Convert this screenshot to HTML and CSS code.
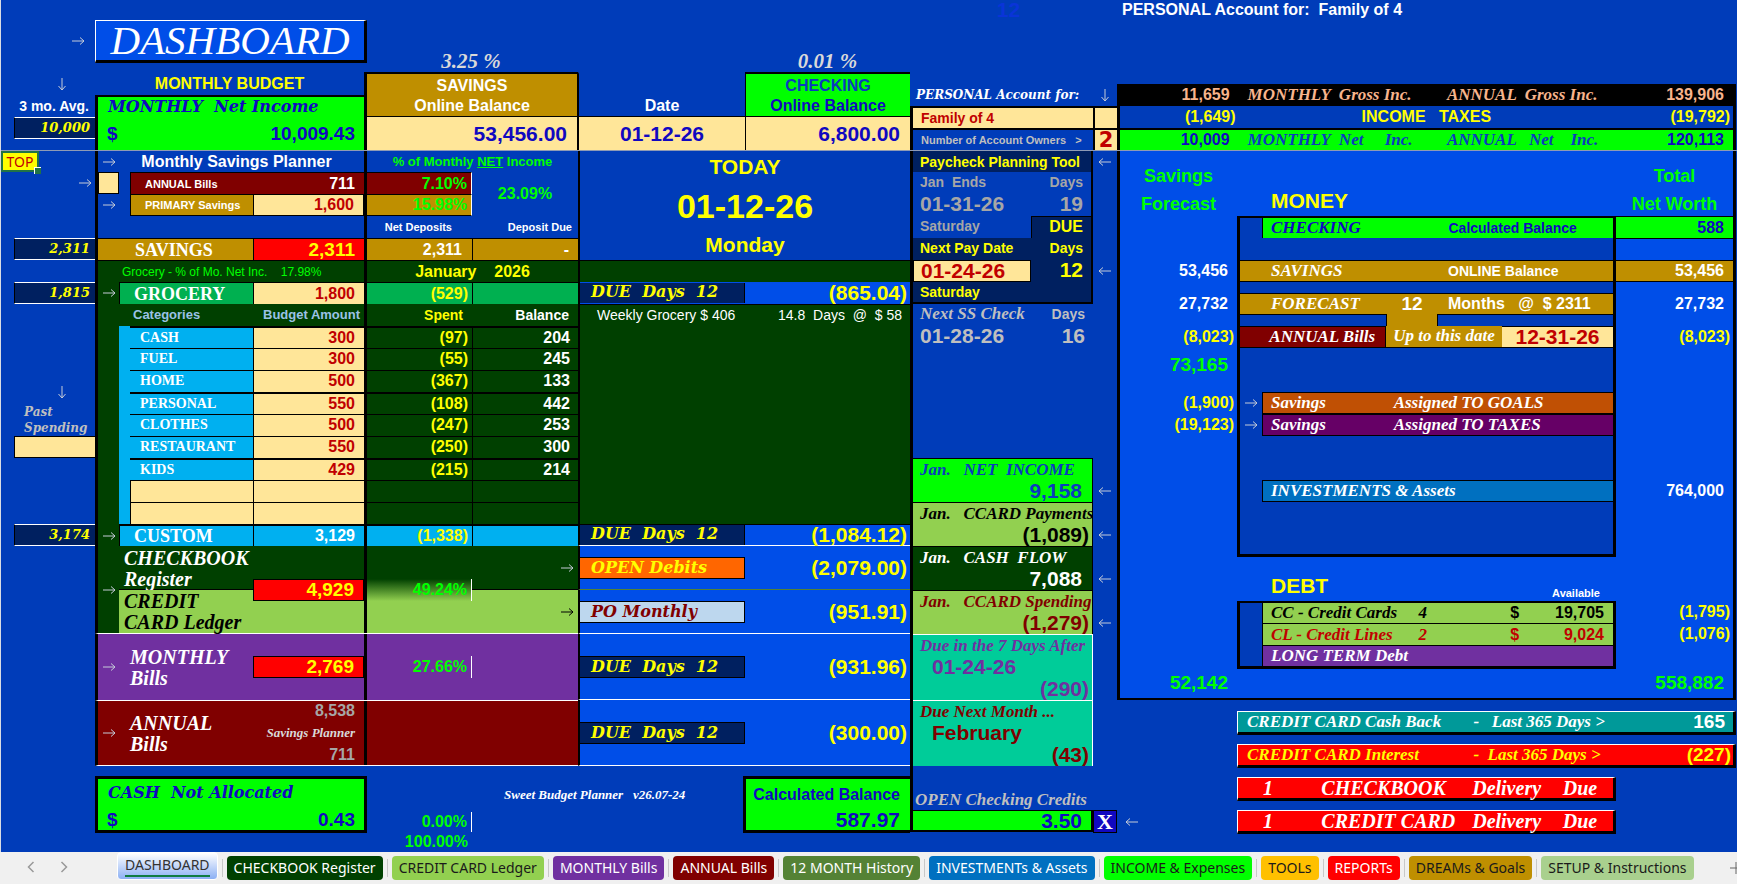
FILE: index.html
```html
<!DOCTYPE html>
<html lang="en">
<head>
<meta charset="utf-8">
<title>Sweet Budget Planner - Dashboard</title>
<link rel="stylesheet" href="styles.css">
</head>
<body>
<svg class="defs" aria-hidden="true">
<symbol id="right" viewBox="0 0 14 10"><path d="M1 5H13M9 1.5L13 5L9 8.5" fill="none" stroke="currentColor"/></symbol>
<symbol id="left" viewBox="0 0 14 10"><path d="M13 5H1M5 1.5L1 5L5 8.5" fill="none" stroke="currentColor"/></symbol>
<symbol id="down" viewBox="0 0 10 14"><path d="M5 1V13M1.5 9L5 13L8.5 9" fill="none" stroke="currentColor"/></symbol>
</svg>
<main class="sheet">
<header class="cols head">
<section class="past">
<div class="h20"></div>
<div class="h42 cell end pr10"><svg class="ar"><use href="#right"/></svg></div>
<div class="h11"></div>
<div class="h22 cell mid pl28"><svg class="ad"><use href="#down"/></svg></div>
<div class="h22 cell end pr6 t14 white">3 mo. Avg.</div>
<div class="h22 cell end avg">10,000</div>
</section>
<section class="budgethead">
<div class="h20"></div>
<h1 class="title">DASHBOARD</h1>
<div class="h10"></div>
<div class="h22 cell mid t16 yellow">MONTHLY BUDGET</div>
<div class="netbox">
<div class="h20 cell wide ink pl10">MONTHLY  Net Income</div>
<div class="grow cell between n22 ink px9"><span>$</span><span>10,009.43</span></div>
</div>
</section>
<section class="bank savings">
<div class="rate">3.25 %</div>
<div class="bankname gold white"><span>SAVINGS</span><span>Online Balance</span></div>
<div class="h33 cell end cream ink t21 pr10">53,456.00</div>
</section>
<section class="bank">
<div class="rate"></div>
<div class="bankname plain white"><span>Date</span></div>
<div class="h33 cell mid cream ink t21">01-12-26</div>
</section>
<section class="bank">
<div class="rate">0.01 %</div>
<div class="bankname green"><span class="bluetext">CHECKING</span><span class="ink">Online Balance</span></div>
<div class="h33 cell end cream ink t21 pr10">6,800.00</div>
</section>
<section class="owner">
<div class="h84 faint t21">12</div>
<div class="h22 cell wide small white pl3">PERSONAL Account for:</div>
<div class="h22 cell cream red t14 pl8 bt2">Family of 4</div>
<div class="h22 cell n13 grey pl8 bt2">Number of Account Owners   &gt;</div>
</section>
<section class="strip">
<div class="h84"></div>
<div class="h22 cell mid"><svg class="ad"><use href="#down"/></svg></div>
<div class="h22 cream bt2 bl2"></div>
<div class="h22 cell mid cream bt2 bl2 red two">2</div>
</section>
<section class="incomes">
<div class="h84 t16 white holder">PERSONAL Account for:  Family of 4</div>
<div class="irow black salmon"><span class="num">11,659</span><span class="it">MONTHLY  Gross Inc.</span><span class="it">ANNUAL  Gross Inc.</span><span class="num">139,906</span></div>
<div class="irow yellow"><span class="num neg">(1,649)</span><span class="both">INCOME   TAXES</span><span class="num neg">(19,792)</span></div>
<div class="irow green ink bt2"><span class="num">10,009</span><span class="it bluetext">MONTHLY  Net     Inc.</span><span class="it bluetext">ANNUAL   Net    Inc.</span><span class="num">120,113</span></div>
</section>
</header>

<div class="cols body">
<section class="past">
<div class="first cell"><button class="top" type="button">TOP</button></div>
<div class="h22 cell end pr3"><svg class="ar"><use href="#right"/></svg></div>
<div class="h44"></div>
<div class="h22 cell end avg">2,311</div>
<div class="h22"></div>
<div class="h22 cell end avg">1,815</div>
<div class="h77"></div>
<div class="h22 cell mid pl28"><svg class="ad"><use href="#down"/></svg></div>
<div class="h33 pastlabel">Past<br>Spending</div>
<div class="h22 cream box"></div>
<div class="h66"></div>
<div class="h22 cell end avg">3,174</div>
</section>

<section class="budget">
<div class="brow first">
<div class="cell mid"><svg class="ar"><use href="#right"/></svg></div>
<div class="cell mid t16 white s3 pr10">Monthly Savings Planner</div>
<div class="cell mid t13 lime s2 bl3">% of Monthly <u>NET</u> Income</div>
</div>
<div class="brow double">
<div class="cell cream bx"></div><div></div>
<div class="cell maroon n13 white pl14 bl1 bt1">ANNUAL Bills</div><div class="cell end maroon white t16 pr8 bt1">711</div>
<div class="cell end maroon lime t16 pr4 bl3 bt1 brw">7.10%</div>
<div class="cell mid lime t16 tallcell">23.09%</div>
<div class="cell mid"><svg class="ar"><use href="#right"/></svg></div><div></div>
<div class="cell gold n13 white pl14 bl1 bt1 bb1">PRIMARY Savings</div><div class="cell end cream red t16 pr8 bx">1,600</div>
<div class="cell end gold lime t16 pr4 bl3 bt1 bb1 brw">15.98%</div>
</div>
<div class="brow">
<div class="s4"></div>
<div class="cell end n13 white pr20 bl3">Net Deposits</div><div class="cell end n13 white pr6">Deposit Due</div>
</div>
<div class="brow line">
<div class="cell gold white caps s3 pl38">SAVINGS</div><div class="cell end fire yellow n22 pr8 bl1">2,311</div>
<div class="cell end gold white t16 pr10 bl3">2,311</div><div class="cell end gold white t16 pr8 bl1">-</div>
</div>
<div class="brow forest bt1">
<div class="cell n12 thin lime s4 pl24">Grocery - % of Mo. Net Inc.    17.98%</div><div class="cell mid t16 yellow s2 bl3">January    2026</div>
</div>
<div class="brow forest line">
<div class="cell mid"><svg class="ar"><use href="#right"/></svg></div>
<div class="cell jade white caps s2 pl14 bl1">GROCERY</div><div class="cell end cream red t16 pr8 bl1">1,800</div>
<div class="cell end jade yellow t16 pr4 bl3">(529)</div><div class="jade bl1"></div>
</div>
<table class="cats">
<thead><tr class="brow forest"><td></td><th class="cell s2 sky2 pl14 t13">Categories</th><th class="cell end t13 sky2 pr4">Budget Amount</th><th class="cell end t14 yellow pr8 bl3">Spent</th><th class="cell end t14 white pr8">Balance</th></tr></thead>
<tbody>
<tr class="brow forest thick"><td></td><td class="sky"></td><th class="cat">CASH</th><td class="amt">300</td><td class="spent">(97)</td><td class="bal">204</td></tr>
<tr class="brow forest"><td></td><td class="sky"></td><th class="cat">FUEL</th><td class="amt">300</td><td class="spent">(55)</td><td class="bal">245</td></tr>
<tr class="brow forest"><td></td><td class="sky"></td><th class="cat">HOME</th><td class="amt">500</td><td class="spent">(367)</td><td class="bal">133</td></tr>
<tr class="brow forest thick"><td></td><td class="sky"></td><th class="cat">PERSONAL</th><td class="amt">550</td><td class="spent">(108)</td><td class="bal">442</td></tr>
<tr class="brow forest"><td></td><td class="sky"></td><th class="cat">CLOTHES</th><td class="amt">500</td><td class="spent">(247)</td><td class="bal">253</td></tr>
<tr class="brow forest"><td></td><td class="sky"></td><th class="cat">RESTAURANT</th><td class="amt">550</td><td class="spent">(250)</td><td class="bal">300</td></tr>
<tr class="brow forest thick"><td></td><td class="sky"></td><th class="cat">KIDS</th><td class="amt">429</td><td class="spent">(215)</td><td class="bal">214</td></tr>
<tr class="brow forest"><td></td><td class="sky"></td><td class="cat empty"></td><td class="amt"></td><td class="spent"></td><td class="bal"></td></tr>
<tr class="brow forest"><td></td><td class="sky"></td><td class="cat empty"></td><td class="amt"></td><td class="spent"></td><td class="bal"></td></tr>
</tbody>
</table>
<div class="brow forest line thickline">
<div class="cell mid"><svg class="ar"><use href="#right"/></svg></div>
<div class="cell sky white caps s2 pl14 bl1 bbw">CUSTOM</div><div class="cell end sky white t16 pr8 bl1 bbw">3,129</div>
<div class="cell end sky yellow t16 pr4 bl3 bbw">(1,338)</div><div class="sky bl1 bbw"></div>
</div>
<div class="brow ledger">
<div class="cell mid forest full"><svg class="ar"><use href="#right"/></svg></div>
<div class="script white forest checkb">CHECKBOOK<br>Register</div>
<div class="script leaf creditb">CREDIT<br>CARD Ledger</div>
<div class="cell end fire yellow n22 pr8 bx ledgersum">4,929</div>
<div class="forest bl3 upper cell end pr4"><svg class="ar"><use href="#right"/></svg></div>
<div class="leaf bl3 lower cell end pr4 dark"><svg class="ar"><use href="#right"/></svg></div>
<div class="fade cell end lime t16 pr4 bl3 brw ledgerpct">49.24%</div>
</div>
<div class="brow bills purple">
<div class="cell mid"><svg class="ar"><use href="#right"/></svg></div>
<div class="cell script white s2 pl11">MONTHLY<br>Bills</div>
<div class="cell"><div class="h22 cell end fire yellow n22 pr8 bx grow">2,769</div></div>
<div class="cell bl3"><div class="h22 cell end lime t16 pr4 brw grow">27.66%</div></div><div></div>
</div>
<div class="brow bills maroon bbw">
<div class="cell mid"><svg class="ar"><use href="#right"/></svg></div>
<div class="cell script white s2 pl11">ANNUAL<br>Bills</div>
<div class="stack silver pr8"><span class="t16">8,538</span><span class="it">Savings Planner</span><span class="t16">711</span></div>
<div class="bl3 s2"></div>
</div>
<div class="h10"></div>
<div class="brow foot">
<div class="netbox cash s4"><div class="h33 cell wide ink pl10">CASH  Not Allocated</div><div class="grow cell between n22 ink px9"><span>$</span><span>0.43</span></div></div>
<div class="version">Sweet Budget Planner   v26.07-24</div>
<div class="pct"><div class="h22 cell end t16 lime pr4 brw">0.00%</div><div class="h20 cell end t16 lime pr4">100.00%</div></div>
</div>
</section>

<section class="due">
<div class="today"><span class="t21">TODAY</span><span class="t34">01-12-26</span><span class="t21">Monday</span></div>
<div class="h22 forest bt1"></div>
<div class="drow one"><div class="tag navy">DUE  Days  12</div><div class="sum">(865.04)</div></div>
<div class="weekly forest bt1"><span>Weekly Grocery $ 406</span><span>14.8  Days  @  $ 58</span></div>
<div class="drow one bt1 bbw"><div class="tag navy">DUE  Days  12</div><div class="sum">(1,084.12)</div></div>
<div class="drow two2 bbg"><div class="tag orange">OPEN Debits</div><div class="sum">(2,079.00)</div></div>
<div class="drow two2 bbw"><div class="tag ice">PO Monthly</div><div class="sum">(951.91)</div></div>
<div class="drow three bbw"><div class="tag navy">DUE  Days  12</div><div class="sum">(931.96)</div></div>
<div class="drow three bbw"><div class="tag navy">DUE  Days  12</div><div class="sum">(300.00)</div></div>
<div class="gap"></div>
<div class="calcrow"><div class="calc"><span class="t16">Calculated Balance</span><span class="t21">587.97</span></div></div>
</section>

<section class="pay">
<div class="tool">
<div class="first cell navy yellow t14 pl7">Paycheck Planning Tool</div>
<div class="prow ash t14"><span>Jan  Ends</span><span>Days</span></div>
<div class="prow ash t21"><span>01-31-26</span><span>19</span></div>
<div class="prow ash t14"><span>Saturday</span><span class="navy yellow t16 bl1 bt1">DUE</span></div>
<div class="prow navy yellow t14"><span>Next Pay Date</span><span>Days</span></div>
<div class="prow navy yellow t21"><span class="cream red bx">01-24-26</span><span>12</span></div>
<div class="prow navy yellow t14 bb2"><span>Saturday</span><span></span></div>
</div>
<div class="prow grey t14"><span class="it">Next SS Check</span><span>Days</span></div>
<div class="prow grey t21"><span>01-28-26</span><span>16</span></div>
<div class="h110"></div>
<div class="flow green bluetext"><span class="it">Jan.   NET  INCOME</span><span class="t21 pos">9,158</span></div>
<div class="flow leaf"><span class="it">Jan.   CCARD Payments</span><span class="t21">(1,089)</span></div>
<div class="flow forest white"><span class="it">Jan.   CASH  FLOW</span><span class="t21 pos">7,088</span></div>
<div class="flow leaf wine"><span class="it">Jan.   CCARD Spending</span><span class="t21">(1,279)</span></div>
<div class="flow mint violet"><span class="it">Due in the 7 Days After</span><span class="t21 lefty">01-24-26</span><span class="t21">(290)</span></div>
<div class="flow mint wine bbw"><span class="it">Due Next Month ...</span><span class="t21 lefty">February</span><span class="t21">(43)</span></div>
<div class="h44 credits it grey">OPEN Checking Credits</div>
<div class="h22 cell end green ink t21 credit">3.50</div>
</section>

<section class="strip">
<div class="first cell mid"><svg class="ar"><use href="#left"/></svg></div>
<div class="h88"></div>
<div class="h22 cell mid"><svg class="ar"><use href="#left"/></svg></div>
<div class="h198"></div>
<div class="h22 cell mid"><svg class="ar"><use href="#left"/></svg></div>
<div class="h22"></div>
<div class="h22 cell mid"><svg class="ar"><use href="#left"/></svg></div>
<div class="h22"></div>
<div class="h22 cell mid"><svg class="ar"><use href="#left"/></svg></div>
<div class="h22"></div>
<div class="h22 cell mid"><svg class="ar"><use href="#left"/></svg></div>
<div class="h176"></div>
<button class="xbtn" type="button">X</button>
</section>

<section class="worth">
<div class="worthbox">
<div class="wrow h66"><div class="wtitle lime"><span>Savings</span><span>Forecast</span></div><h2 class="heading">MONEY</h2><div class="wtitle lime"><span>Total</span><span>Net Worth</span></div></div>
<div class="wrow"><div></div><div class="m btk"><div class="s4w green ink line1"><span class="it c1">CHECKING</span><span class="c2 t14">Calculated Balance</span></div></div><div class="num green ink line1">588</div></div>
<div class="wrow"><div></div><div class="m"></div><div></div></div>
<div class="wrow"><div class="num">53,456</div><div class="m"><div class="wfull gold line1"><span class="it c1">SAVINGS</span><span class="c2 t14">ONLINE Balance</span></div></div><div class="num gold line1">53,456</div></div>
<div class="wrow h11"><div></div><div class="m"></div><div></div></div>
<div class="wrow"><div class="num">27,732</div><div class="m"><div class="wfull gold line1"><span class="it c1">FORECAST</span><span class="c12 n22">12</span><span class="c2 t16">Months   @  $ 2311</span></div></div><div class="num">27,732</div></div>
<div class="wrow h11"><div></div><div class="m"><div class="link gold"></div></div><div></div></div>
<div class="wrow"><div class="num neg">(8,023)</div><div class="m"><div class="ann maroon it">ANNUAL Bills</div><div class="upto gold it">Up to this date</div><div class="cell mid cream red t21 date">12-31-26</div></div><div class="num neg">(8,023)</div></div>
<div class="wrow h44"><div class="num lime n22">73,165</div><div class="m"></div><div></div></div>
<div class="wrow"><div class="num neg">(1,900)</div><div class="m"><div class="cell mid"><svg class="ar"><use href="#right"/></svg></div><div class="s4w rust line1"><span class="it c1">Savings</span><span class="it c15">Assigned TO GOALS</span></div></div><div></div></div>
<div class="wrow"><div class="num neg">(19,123)</div><div class="m"><div class="cell mid"><svg class="ar"><use href="#right"/></svg></div><div class="s4w plum line1"><span class="it c1">Savings</span><span class="it c15">Assigned TO TAXES</span></div></div><div></div></div>
<div class="wrow h44"><div></div><div class="m"></div><div></div></div>
<div class="wrow"><div></div><div class="m"><div class="s4w ocean line1"><span class="it c1">INVESTMENTS &amp; Assets</span></div></div><div class="num">764,000</div></div>
<div class="wrow h55"><div></div><div class="m bbk"></div><div></div></div>
<div class="wrow h44"><div></div><div class="debthead"><h2 class="heading">DEBT</h2><span class="n13">Available</span></div><div></div></div>
<div class="wrow"><div></div><div class="m btk"><div class="s4w leaf debt"><span class="it">CC - Credit Cards</span><span class="it">4</span><span class="t16">$</span><span class="t16">19,705</span></div></div><div class="num neg">(1,795)</div></div>
<div class="wrow"><div></div><div class="m"><div class="s4w leaf debt crimson bt1"><span class="it">CL - Credit Lines</span><span class="it">2</span><span class="t16">$</span><span class="t16">9,024</span></div></div><div class="num neg">(1,076)</div></div>
<div class="wrow"><div></div><div class="m bbk"><div class="s4w purple bt1"><span class="it c1">LONG TERM Debt</span></div></div><div></div></div>
<div class="wrow h33"><div class="num lime n22">52,142</div><div></div><div class="num lime n22">558,882</div></div>
</div>
<div class="wbar"><div></div><div class="bar teal it"><span>CREDIT CARD Cash Back</span><span>-   Last 365 Days &gt;</span><b>165</b></div></div>
<div class="wbar"><div></div><div class="bar fire yellow it"><span>CREDIT CARD Interest</span><span>-  Last 365 Days &gt;</span><b class="neg">(227)</b></div></div>
<div class="wbar short"><div></div><div class="bar fire script"><span>1</span><span>CHECKBOOK</span><span>Delivery</span><span>Due</span></div></div>
<div class="wbar short"><div class="cell pl8"><svg class="ar"><use href="#left"/></svg></div><div class="bar fire script"><span>1</span><span>CREDIT CARD</span><span>Delivery</span><span>Due</span></div></div>
</section>
</div>
</main>

<nav class="tabs" aria-label="Sheets">
<button class="nav" type="button" aria-label="Previous sheets"><svg viewBox="0 0 8 12"><path d="M6.500 1L1.500 6L6.500 11" fill="none" stroke="currentColor" stroke-width="1.500"/></svg></button>
<button class="nav" type="button" aria-label="Next sheets"><svg viewBox="0 0 8 12"><path d="M1.500 1L6.500 6L1.500 11" fill="none" stroke="currentColor" stroke-width="1.500"/></svg></button>
<a class="tab current" href="#dashboard"><span>DASHBOARD</span></a>
<a class="tab forest" href="#checkbook">CHECKBOOK Register</a>
<a class="tab leaf" href="#ledger">CREDIT CARD Ledger</a>
<a class="tab purple" href="#monthly">MONTHLY Bills</a>
<a class="tab maroon" href="#annual">ANNUAL Bills</a>
<a class="tab moss" href="#history">12 MONTH History</a>
<a class="tab ocean" href="#assets">INVESTMENTs &amp; Assets</a>
<a class="tab green" href="#income">INCOME &amp; Expenses</a>
<a class="tab amber" href="#tools">TOOLs</a>
<a class="tab fire" href="#reports">REPORTs</a>
<a class="tab gold dk" href="#dreams">DREAMs &amp; Goals</a>
<a class="tab sage" href="#setup">SETUP &amp; Instructions</a>
<button class="add" type="button" aria-label="New sheet"><svg viewBox="0 0 14 14"><path d="M7 1V13M1 7H13" fill="none" stroke="currentColor"/></svg></button>
</nav>
</body>
</html>
```
FILE: styles.css
```css
* { box-sizing: border-box; }
body {
  margin: 0;
  min-height: 100vh;
  display: flex;
  flex-direction: column;
  overflow-x: hidden;
  font: bold 16px/20px "Liberation Sans", Arial, sans-serif;
  background: #003cb9;
  color: #000;
}
.defs { display: none; }
.sheet { flex: 1; border-left: 1px solid #d8dce4; }
.cols { display: grid; }
.head { grid-template-columns: 94fr 269fr 214fr 167fr 165fr 183fr 24fr 620fr; border-bottom: 1px solid #8f9bb5; }
.body { grid-template-columns: 94fr 483fr 332fr 183fr 24fr 620fr; }
section { display: flex; flex-direction: column; min-width: 0; white-space: pre; }

.h10, .gap { height: 10px; } .h11 { height: 11px; } .h20 { height: 20px; } .first { height: 21px; }
.h22 { height: 22px; } .h33 { height: 33px; } .h42 { height: 42px; } .h44 { height: 44px; }
.h66 { height: 66px; } .h77 { height: 77px; } .h84 { height: 84px; } .h88 { height: 88px; }
.h110 { height: 110px; } .h176 { height: 176px; } .h198 { height: 198px; }
.grow { flex: 1; }

.cell { display: flex; align-items: center; min-width: 0; }
.mid { justify-content: center; }
.end { justify-content: flex-end; }
.between { justify-content: space-between; }
.pl3 { padding-left: 3px; } .pl7 { padding-left: 7px; } .pl8 { padding-left: 8px; } .pl10 { padding-left: 10px; }
.pl11 { padding-left: 11px; } .pl14 { padding-left: 14px; } .pl24 { padding-left: 24px; } .pl28 { padding-left: 28px; } .pl38 { padding-left: 37px; }
.pr3 { padding-right: 3px; } .pr4 { padding-right: 4px; } .pr6 { padding-right: 6px; } .pr8 { padding-right: 9px; }
.pr10 { padding-right: 10px; } .pr20 { padding-right: 20px; } .px9 { padding: 0 9px; }

/* type */
.t13 { font-size: 13px; } .t14 { font-size: 14px; } .t16 { font-size: 16px; }
.t21 { font-size: 21px; } .t34 { font-size: 34px; }
.n12 { font-size: 12px; } .n13 { font-size: 11px; } .n22 { font-size: 19px; }
.thin { font-weight: normal; }
.it { font: italic bold 17px/20px "Liberation Serif", "Times New Roman", serif; }
.wide { font: italic bold 16px/18px "DejaVu Serif", serif; }
.wide.small { font-size: 12px; }
.script { font: italic bold 20px/21px "Liberation Serif", "Times New Roman", serif; }
.caps { font: bold 18px/20px "Liberation Serif", "Times New Roman", serif; }

/* colours */
.white { color: #fff; } .yellow { color: #ff0; } .lime { color: #0f0; } .red { color: #c00000; }
.crimson { color: #c00000; } .grey { color: #bfbfbf; } .ash { color: #a6a6a6; } .silver { color: #a6a6a6; }
.ink { color: #1108c0; } .bluetext { color: #0a3cbe; } .salmon { color: #f8b48c; } .wine { color: #800000; }
.violet { color: #7030a0; } .sky2 { color: #9bc2e6; } .dark { color: #000; }
.gold { background: #bf8f00; } .cream { background: #ffe699; } .green { background: #0f0; }
.maroon { background: #800000; } .fire { background: #f00; } .forest { background: #004000; }
.jade { background: #00b050; } .sky { background: #00b0f0; } .leaf { background: #92d050; }
.purple { background: #7030a0; } .navy { background: #002060; } .orange { background: #ff6600; }
.ice { background: #bdd7ee; } .mint { background: #00cc99; } .black { background: #000; }
.rust { background: #c05004; } .plum { background: #660066; } .ocean { background: #0070c0; }
.teal { background: #009999; } .moss { background: #548235; } .amber { background: #ffc000; } .sage { background: #a9d08e; }

/* rules */
.bx { border: 1px solid #000; } .bl1 { border-left: 1px solid #000; } .bl2 { border-left: 2px solid #000; }
.bl3 { border-left: 3px solid #000; } .bt1 { border-top: 1px solid #000; } .bt2 { border-top: 2px solid #000; }
.bb1 { border-bottom: 1px solid #000; } .bb2 { border-bottom: 2px solid #000; }
.bbw { border-bottom: 1px solid #fff; } .bbg { border-bottom: 1px solid #548235; } .brw { border-right: 1px solid #fff; }

.ar { width: 14px; height: 10px; color: #c5cbd8; flex: none; }
.ad { width: 10px; height: 14px; color: #c5cbd8; flex: none; }
.dark .ar { color: #000; }

/* averages column */
.past > .avg, .past > .box { margin-left: 13px; }
.avg {
  background: #002060; color: #ff0; padding-right: 5px;
  border: 1px solid #fff; border-left-color: #000; border-right: 0;
  font: italic bold 13px/20px "DejaVu Serif", serif;
}
.box { border: 1px solid #000; border-right: 0; }
.pastlabel { color: #bfbfbf; padding: 1px 0 0 23px; font: italic bold 12px/16px "DejaVu Serif", serif; }
.top {
  position: relative; width: 38px; height: 21px; padding: 0; background: #ff0; color: #c00000;
  border: 2px solid #217346; font: 14px/16px "Noto Sans", sans-serif;
}
.top::after { content: ""; position: absolute; right: -4px; bottom: -4px; width: 6px; height: 6px; background: #217346; border: solid #fff; border-width: 1px 0 0 1px; }

/* header */
.title {
  margin: 0 -3px 0 0; height: 43px; text-align: center; color: #fff; background: #004ee8;
  border: 1px solid #fff; border-right: 3px solid #000; border-bottom: 3px solid #000;
  font: italic 41px/39px "Liberation Serif", serif;
}
.netbox { height: 55px; background: #0f0; border-top: 2px solid #000; border-left: 3px solid #000; display: flex; flex-direction: column; }
.rate { height: 72px; padding-top: 51px; text-align: center; color: #d9d9d9; font: italic bold 21px/21px "Liberation Serif", serif; }
.bankname {
  height: 45px; display: flex; flex-direction: column; justify-content: flex-end; align-items: center;
  border-top: 2px solid #000; border-bottom: 1px solid #000;
}
.bankname.plain { border-top-color: transparent; }
.bank > .bankname, .bank > .cell { border-left: 1px solid #000; }
.savings > .bankname, .savings > .cell { border-left-width: 3px; border-right: 1px solid #000; }
.owner > .cell { border-left: 3px solid #000; }
.owner > .small { border-left-color: transparent; }
.faint { color: #0a34d8; text-align: center; padding-left: 14px; line-height: 20px; }
.two { font: bold 21px/20px "DejaVu Sans", sans-serif; }
.holder { padding-left: 5px; line-height: 20px; }
.irow {
  display: grid; grid-template-columns: 125fr 200fr 170fr 120fr; align-items: center;
  height: 22px; border-left: 3px solid #000; border-right: 3px solid #000; margin-right: 1px;
}
.num { display: flex; align-items: center; justify-content: flex-end; padding-right: 9px; }
.num.neg { padding-right: 3px; color: #ff0; }
.irow .num:first-child { padding-right: 15px; }
.irow .num.neg:first-child { padding-right: 9px; }
.irow .it { padding-left: 3px; }
.both { grid-column: span 2; padding-left: 117px; }

/* budget */
.brow { display: grid; grid-template-columns: 21fr 11fr 123fr 111fr 108fr 106fr; height: 22px; border-left: 3px solid #000; }
.brow.first { height: 21px; }
.brow.double { grid-template-rows: 22px 22px; height: 44px; }
.tallcell { grid-row: 1 / span 2; grid-column: 6; }
.s2 { grid-column: span 2; } .s3 { grid-column: span 3; } .s4 { grid-column: span 4; }
.line > :not(:first-child), .line > .gold { border-top: 1px solid #000; }
.cats, .cats thead, .cats tbody { display: flex; flex-direction: column; }
.cats td, .cats th { padding-top: 0; padding-bottom: 0; text-align: left; }
.cats .cat { background: #00b0f0; color: #fff; padding-left: 10px; border-top: 1px solid #000; font: bold 14px/20px "Liberation Serif", serif; }
.cats .empty { background: #ffe699; border-left: 1px solid #000; }
.cats .amt { background: #ffe699; color: #c00000; border-top: 1px solid #000; border-left: 1px solid #000; text-align: right; padding-right: 9px; }
.cats .spent { color: #ff0; border-top: 1px solid #000; border-left: 3px solid #000; text-align: right; padding-right: 4px; }
.cats .bal { color: #fff; border-top: 1px solid #000; border-left: 1px solid #000; text-align: right; padding-right: 8px; }
.cats .thick > .cat, .cats .thick > .amt, .cats .thick > .spent, .cats .thick > .bal, .thickline > :not(:first-child) { border-top-width: 2px; }
.ledger { grid-template-rows: 33px 11px 11px 32px; height: 88px; border-bottom: 1px solid #fff; }
.full { grid-area: 1 / 1 / 5 / 2; }
.checkb { grid-area: 1 / 2 / 3 / 5; padding: 2px 0 0 5px; border-bottom: 1px solid #000; }
.creditb { grid-area: 3 / 2 / 5 / 5; padding: 1px 0 0 5px; }
.ledgersum { grid-area: 2 / 4 / 4 / 5; }
.upper { grid-area: 1 / 5 / 3 / 7; border-bottom: 1px solid #000; }
.lower { grid-area: 3 / 5 / 5 / 7; }
.ledgerpct { grid-area: 2 / 5 / 4 / 6; }
.fade { background: linear-gradient(#004000, #92d050); }
.bills { height: 66px; }
.bills > .script { padding-top: 2px; }
.bills + .bills { border-top: 1px solid #fff; }
.stack { display: flex; flex-direction: column; align-items: flex-end; justify-content: space-between; }
.stack .it { font-size: 13px; color: #d9d9d9; }
.foot { grid-template-columns: 24fr 11fr 123fr 111fr 108fr 106fr; grid-template-rows: 57px; height: 76px; border-left: 0; }
.foot .cash { height: 57px; margin-right: -3px; border: 3px solid #000; }
.foot .cash .grow { padding-top: 3px; }
.version { grid-column: 5 / 7; grid-row: 1; padding: 9px 0 0 140px; color: #fff; font: italic bold 13px/20px "Liberation Serif", serif; }
.pct { grid-column: 5; grid-row: 1; padding-top: 36px; display: flex; flex-direction: column; }

/* due column */
.due > * { border-left: 2px solid #000; }
.due > .gap, .due > .calcrow { border-left: 0; }
.today { height: 109px; display: flex; flex-direction: column; align-items: center; justify-content: space-between; color: #ff0; padding: 6px 0 5px; }
.today .t34 { line-height: 34px; }
.drow { display: grid; grid-template-columns: 165fr 165fr; align-items: center; background: #004ee8; }
.one { height: 22px; } .two2 { height: 44px; } .three { height: 66px; }
.tag { height: 22px; padding-left: 11px; border: 1px solid #000; border-left: 0; color: #ff0; font: italic bold 16px/20px "DejaVu Serif", serif; }
.one .tag { height: 20px; line-height: 18px; border-width: 0 1px 0 0; }
.tag.ice { color: #800000; }
.sum { color: #ff0; font-size: 21px; text-align: right; padding-right: 3px; }
.weekly { height: 220px; display: flex; justify-content: space-between; padding: 0 8px 0 17px; color: #fff; font-weight: normal; font-size: 14px; }
.calcrow { display: grid; grid-template-columns: 165fr 167fr; height: 57px; }
.calc { grid-column: 2; background: #0f0; color: #1108c0; border: 3px solid #000; border-right: 0; padding: 6px 10px 0 7px; display: flex; flex-direction: column; justify-content: space-between; align-items: flex-end; }

/* paycheck column */
.pay { border-left: 3px solid #000; align-self: start; }
.tool { border-right: 2px solid #000; display: flex; flex-direction: column; }
.prow { display: grid; grid-template-columns: 119fr 61fr; height: 22px; }
.prow > span { padding-left: 7px; }
.prow > span:last-child { text-align: right; padding-right: 8px; }
.flow { display: flex; flex-direction: column; border: 1px solid #000; border-left: 0; border-bottom: 0; padding-left: 7px; }
.flow > span { height: 22px; line-height: 21px; }
.flow > :first-child { height: 21px; }
.flow > .t21 { text-align: right; padding-right: 3px; }
.flow > .pos { padding-right: 10px; }
.flow > .lefty { text-align: left; padding-left: 12px; }
.flow.mint { border-color: #fff; }
.credits { padding: 24px 0 0 2px; }
.credit { padding-right: 9px; border: solid #000; border-width: 1px 2px 2px 0; }
.xbtn { height: 23px; padding: 0; color: #fff; background: #1108c0; border: 1px solid #000; font: bold 22px/20px "Liberation Serif", serif; }

/* net worth */
.worthbox { margin-right: 1px; border: 3px solid #000; border-top: 0; border-bottom-width: 2px; background: #004ee8; color: #fff; display: flex; flex-direction: column; }
.wrow { display: grid; grid-template-columns: 117fr 379fr 117fr; height: 22px; }
.wrow.h11 { height: 11px; } .wrow.h33 { height: 31px; } .wrow.h44 { height: 44px; } .wrow.h55 { height: 55px; } .wrow.h66 { height: 65px; }
.wrow.h44 .num { height: 33px; }
.wrow > .num:first-child { padding-right: 9px; }
.wrow > .num.neg:first-child { padding-right: 3px; }
.lime.num { color: #0f0; }
.wtitle { display: flex; flex-direction: column; align-items: center; justify-content: space-between; padding: 15px 0 2px; font-size: 18px; }
.heading { margin: 0; color: #ff0; font-size: 21px; line-height: 22px; align-self: end; padding: 0 0 4px 34px; }
.m { display: grid; grid-template-columns: 22fr 124fr 52fr 64fr 111fr; background: #003cb9; border-left: 3px solid #000; border-right: 3px solid #000; }
.btk { border-top: 2px solid #000; } .bbk { border-bottom: 3px solid #000; }
.s4w { grid-column: 2 / 6; border-left: 1px solid #000; display: grid; grid-template-columns: 124fr 52fr 175fr; align-items: center; }
.wfull { grid-column: 1 / 6; display: grid; grid-template-columns: 146fr 52fr 175fr; align-items: center; }
.line1 { border-top: 1px solid #000; border-bottom: 1px solid #000; }
.btk .line1 { border-top: 0; }
.c1 { grid-column: 1; grid-row: 1; padding-left: 8px; }
.wfull .c1 { padding-left: 31px; }
.c12 { grid-column: 2; grid-row: 1; text-align: center; }
.c15 { grid-column: 2 / 4; grid-row: 1; padding-left: 7px; }
.c2 { grid-column: 3; grid-row: 1; padding-left: 10px; }
.link { grid-column: 3; margin: -1px 0; border: solid #000; border-width: 0 1px; }
.ann { grid-column: 1 / 3; text-align: right; padding-right: 10px; border: 1px solid #000; border-left: 0; }
.upto { grid-column: 3 / 5; text-align: center; border-bottom: 1px solid #000; }
.date { border: solid #000; border-width: 1px 0; }
.debthead { display: flex; justify-content: space-between; align-items: flex-end; padding-right: 16px; }
.debthead .n13 { line-height: 16px; }
.s4w.debt { grid-template-columns: 156fr 74fr 45fr 76fr; }
.debt:not(.crimson) { color: #000; }
.debt > :first-child { padding-left: 8px; }
.debt > :nth-child(3) { text-align: center; }
.debt > :nth-child(4) { text-align: right; padding-right: 9px; }
.wbar { display: grid; grid-template-columns: 120fr 499fr; height: 22px; margin: 11px 1px 0 0; }
.wbar.short { grid-template-columns: 120fr 379fr 120fr; }
.bar { display: grid; grid-template-columns: 232fr 180fr 86fr; height: 24px; color: #fff; border: 1px solid #fff; border-right: 3px solid #000; border-bottom: 3px solid #000; padding-left: 9px; }
.bar.yellow { color: #ff0; }
.bar b { font: bold 19px/20px "Liberation Sans", Arial, sans-serif; text-align: right; padding-right: 8px; }
.bar b.neg { padding-right: 2px; }
.bar.script { grid-template-columns: 58fr 150fr 90fr 50fr; padding-left: 25px; line-height: 20px; }

/* sheet tabs */
.tabs { display: flex; align-items: center; gap: 9px; height: 32px; background: #f0f0f0; padding-left: 19px; overflow: hidden; white-space: nowrap; }
.nav { flex: none; width: 24px; height: 24px; padding: 0; border: 0; background: none; color: #999; }
.nav svg { width: 8px; height: 12px; }
.tab { flex: none; position: relative; height: 24px; padding: 0 7px; border-radius: 4px; color: #fff; text-decoration: none; font: 14px/24px "Noto Sans", "Open Sans", sans-serif; }
.tab:not(.current)::before { content: ""; position: absolute; left: -5px; top: 3px; width: 1px; height: 18px; background: #c8c8c8; }
.tab.leaf, .tab.green, .tab.amber, .tab.dk, .tab.sage { color: #1a1a1a; }
.tab.current { height: 28px; margin: 0 0 4px 32px; color: #333; background: linear-gradient(#fff, #8cb0f4); border: 1px solid #fff; }
.current span { display: block; height: 24px; border-bottom: 2px solid #107c41; }
.add { margin-left: auto; padding: 0; width: 8px; height: 14px; border: 0; background: none; color: #666; overflow: hidden; }
.add svg { width: 14px; height: 14px; display: block; }
```
